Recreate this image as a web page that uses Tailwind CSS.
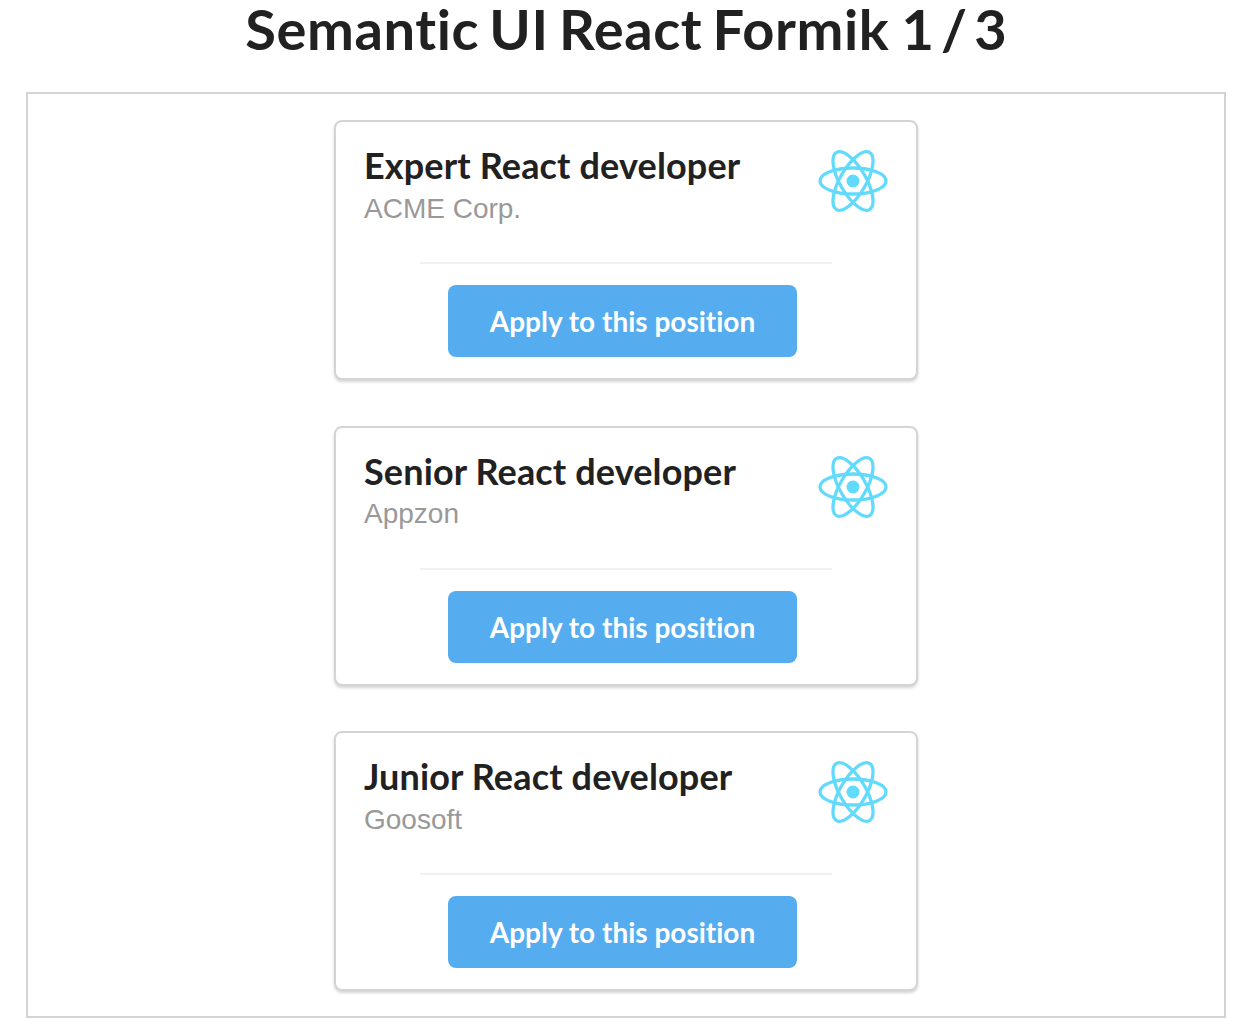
<!doctype html>
<html><head><meta charset="utf-8"><script src="https://cdn.jsdelivr.net/npm/@tailwindcss/browser@4"></script></head>
<body class="bg-white font-['Lato',sans-serif] text-[#212121] overflow-hidden [font-variant-ligatures:none]">
<div class="h-[1018px] overflow-hidden">
<h1 class="h-[61px] text-center text-[56px] leading-[58px] font-bold text-[#212121] tracking-[0.6px] [word-spacing:-4px]">Semantic UI React Formik <span class="ml-[2px] tracking-normal [word-spacing:-6.5px]">1 / 3</span></h1>
<div class="mt-[31px] mx-[26px] h-[926px] border-2 border-[#d4d4d5] pt-[26px] flex flex-col items-center gap-[45.5px]">

<div class="w-[584px] h-[260px] shrink-0 bg-white rounded-[8px] border-2 border-[#d4d4d5] shadow-[0_2px_3px_0_#d4d4d5] flex flex-col">
<div class="flex justify-between h-[140px] pl-[28px] pr-[28px] pt-[23px]"><div><div class="text-[36px] leading-[40px] font-bold tracking-[0.14px]">Expert React developer</div><div class="text-[28px] leading-[30px] text-[#999] font-['Liberation_Sans',sans-serif] mt-[8.75px]">ACME Corp.</div></div>
<svg class="w-[70px] h-[64px] mt-[4px]" viewBox="-35 -32 70 64" fill="none" stroke="#61dafb" stroke-width="3.3"><circle r="6.5" fill="#61dafb" stroke="none"/><ellipse rx="33" ry="13"/><ellipse rx="33" ry="13" transform="rotate(60)"/><ellipse rx="33" ry="13" transform="rotate(120)"/></svg></div>
<div class="mx-[84px] h-[2px] bg-[#f1f1f1]"></div>
<button class="mt-[21px] ml-[112px] w-[349px] h-[72px] bg-[#55acee] rounded-[8px] text-white text-[28px] font-bold">Apply to this position</button>
</div>

<div class="w-[584px] h-[260px] shrink-0 bg-white rounded-[8px] border-2 border-[#d4d4d5] shadow-[0_2px_3px_0_#d4d4d5] flex flex-col">
<div class="flex justify-between h-[140px] pl-[28px] pr-[28px] pt-[23px]"><div><div class="text-[36px] leading-[40px] font-bold tracking-[0.14px]">Senior React developer</div><div class="text-[28px] leading-[30px] text-[#999] font-['Liberation_Sans',sans-serif] mt-[8.75px]">Appzon</div></div>
<svg class="w-[70px] h-[64px] mt-[4px]" viewBox="-35 -32 70 64" fill="none" stroke="#61dafb" stroke-width="3.3"><circle r="6.5" fill="#61dafb" stroke="none"/><ellipse rx="33" ry="13"/><ellipse rx="33" ry="13" transform="rotate(60)"/><ellipse rx="33" ry="13" transform="rotate(120)"/></svg></div>
<div class="mx-[84px] h-[2px] bg-[#f1f1f1]"></div>
<button class="mt-[21px] ml-[112px] w-[349px] h-[72px] bg-[#55acee] rounded-[8px] text-white text-[28px] font-bold">Apply to this position</button>
</div>

<div class="w-[584px] h-[260px] shrink-0 bg-white rounded-[8px] border-2 border-[#d4d4d5] shadow-[0_2px_3px_0_#d4d4d5] flex flex-col">
<div class="flex justify-between h-[140px] pl-[28px] pr-[28px] pt-[23px]"><div><div class="text-[36px] leading-[40px] font-bold tracking-[0.14px]">Junior React developer</div><div class="text-[28px] leading-[30px] text-[#999] font-['Liberation_Sans',sans-serif] mt-[8.75px]">Goosoft</div></div>
<svg class="w-[70px] h-[64px] mt-[4px]" viewBox="-35 -32 70 64" fill="none" stroke="#61dafb" stroke-width="3.3"><circle r="6.5" fill="#61dafb" stroke="none"/><ellipse rx="33" ry="13"/><ellipse rx="33" ry="13" transform="rotate(60)"/><ellipse rx="33" ry="13" transform="rotate(120)"/></svg></div>
<div class="mx-[84px] h-[2px] bg-[#f1f1f1]"></div>
<button class="mt-[21px] ml-[112px] w-[349px] h-[72px] bg-[#55acee] rounded-[8px] text-white text-[28px] font-bold">Apply to this position</button>
</div>

</div></div>
</body></html>
